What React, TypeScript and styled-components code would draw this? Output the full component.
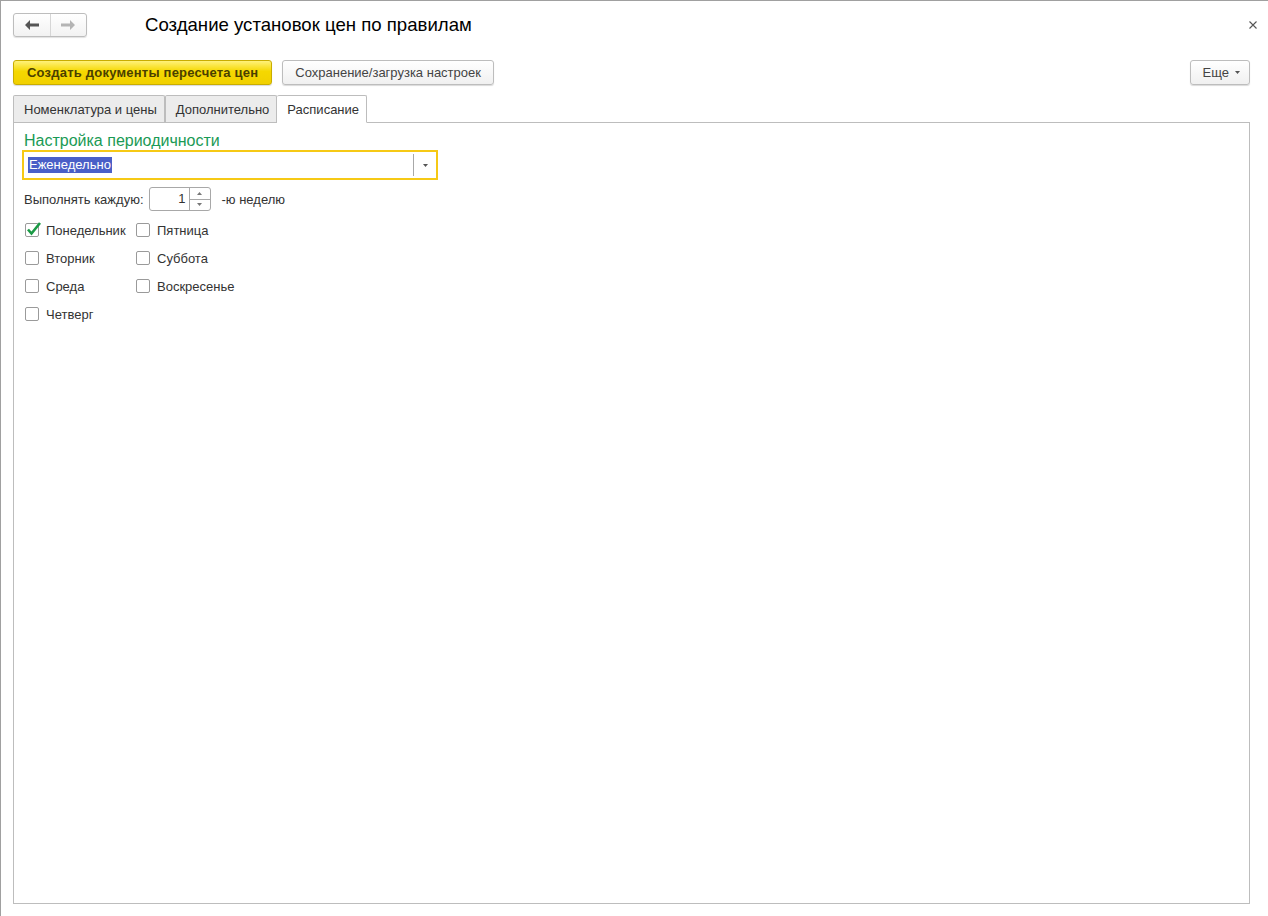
import React from "react";
import styled, { createGlobalStyle } from "styled-components";

const GlobalStyle = createGlobalStyle`
  html, body {
    margin: 0;
    padding: 0;
    background: #fff;
  }
  body {
    font-family: Arial, "Liberation Sans", sans-serif;
    font-size: 13px;
    color: #333;
  }
`;

const Window = styled.div`
  box-sizing: border-box;
  width: 1268px;
  height: 916px;
  border-top: 1px solid #a0a0a0;
  border-left: 1px solid #a0a0a0;
  padding: 12px 18px 12px 12px;
  display: flex;
  flex-direction: column;
  background: #fff;
`;

const TitleBar = styled.div`
  display: flex;
  align-items: center;
  height: 24px;
`;

const NavGroup = styled.div`
  display: flex;
  width: 74px;
  height: 24px;
  box-sizing: border-box;
  border: 1px solid #bdbdbd;
  border-radius: 3px;
  background: linear-gradient(#fff, #f2f2f2);
  box-shadow: 0 1px 1px rgba(0, 0, 0, 0.12);
`;

const NavButton = styled.div<{ $divider?: boolean }>`
  flex: 1;
  display: flex;
  align-items: center;
  justify-content: center;
  border-right: ${(p) => (p.$divider ? "1px solid #d6d6d6" : "none")};
`;

const Title = styled.h1`
  margin: 0 0 0 58px;
  font-size: 18.6px;
  font-weight: normal;
  color: #000;
  flex: 1;
`;

const CloseMark = styled.div`
  width: 14px;
  height: 14px;
  margin-right: -10px;
  display: flex;
  align-items: center;
  justify-content: center;
`;

const Toolbar = styled.div`
  display: flex;
  align-items: center;
  gap: 10px;
  margin-top: 23px;
`;

const Button = styled.button<{ $primary?: boolean }>`
  box-sizing: border-box;
  height: 25px;
  padding: 0 ${(p) => (p.$primary ? "13px" : "12px")};
  font-family: Arial, "Liberation Sans", sans-serif;
  font-size: 13px;
  font-weight: ${(p) => (p.$primary ? "bold" : "normal")};
  letter-spacing: ${(p) => (p.$primary ? "0.22px" : "0")};
  color: ${(p) => (p.$primary ? "#4a4000" : "#444")};
  border: 1px solid ${(p) => (p.$primary ? "#c9ad00" : "#bdbdbd")};
  border-radius: 3px;
  background: ${(p) =>
    p.$primary ? "linear-gradient(#fff27a, #f5d800 45%, #f1d000)" : "linear-gradient(#fff, #f0f0f0)"};
  box-shadow: 0 1px 1px rgba(0, 0, 0, 0.15);
  display: flex;
  align-items: center;
  gap: 6px;
  cursor: pointer;
`;

const MoreButton = styled(Button)`
  padding: 0 9px 0 12px;
`;

const Spacer = styled.div`
  flex: 1;
`;

const Tabs = styled.div`
  display: flex;
  margin-top: 10px;
  height: 28px;
  position: relative;
  z-index: 1;
`;

const Tab = styled.div<{ $active?: boolean }>`
  box-sizing: border-box;
  height: ${(p) => (p.$active ? "28px" : "27px")};
  padding: 0 7px 0 10px;
  display: flex;
  align-items: center;
  border: 1px solid #bdbdbd;
  border-bottom: ${(p) => (p.$active ? "1px solid #fff" : "none")};
  border-left: ${(p) => (p.$active ? "none" : "1px solid #bdbdbd")};
  border-radius: 2px 2px 0 0;
  background: ${(p) => (p.$active ? "#fff" : "#ececec")};
  color: #333;
  align-self: flex-start;
  &:first-child {
    border-left: 1px solid #bdbdbd;
  }
`;

const Panel = styled.div`
  flex: 1;
  margin-top: -1px;
  border: 1px solid #bdbdbd;
  padding: 9px 10px;
  display: flex;
  flex-direction: column;
`;

const GroupTitle = styled.div`
  color: #1a9a55;
  font-size: 16px;
  line-height: 18px;
`;

const Select = styled.div`
  box-sizing: border-box;
  width: 416px;
  height: 30px;
  margin: 0 0 0 -2px;
  border: 2px solid #f6c915;
  display: flex;
  align-items: center;
  padding-left: 4px;
`;

const SelectedText = styled.span`
  background: #4a5fc7;
  color: #fff;
  font-size: 13px;
  line-height: 16px;
  padding: 0 1px;
`;

const SelectArrow = styled.div`
  margin-left: auto;
  width: 22px;
  height: 22px;
  border-left: 1px solid #a8a8a8;
  display: flex;
  align-items: center;
  justify-content: center;
`;

const Row = styled.div`
  display: flex;
  align-items: center;
  margin-top: 7px;
  gap: 5px;
`;

const Spin = styled.div`
  box-sizing: border-box;
  width: 62px;
  height: 24px;
  border: 1px solid #a8a8a8;
  border-radius: 3px;
  display: flex;
  margin-right: 6px;
`;

const SpinValue = styled.div`
  flex: 1;
  text-align: right;
  padding-right: 3px;
  line-height: 22px;
  color: #333;
`;

const SpinButtons = styled.div`
  width: 20px;
  border-left: 1px solid #a8a8a8;
  display: flex;
  flex-direction: column;
`;

const SpinButton = styled.div<{ $top?: boolean }>`
  flex: 1;
  display: flex;
  align-items: center;
  justify-content: center;
  border-bottom: ${(p) => (p.$top ? "1px solid #a8a8a8" : "none")};
`;

const Days = styled.div`
  display: grid;
  grid-template-columns: 111px auto;
  grid-auto-flow: column;
  grid-template-rows: repeat(4, 28px);
  margin-top: 5px;
  justify-content: start;
`;

const DayLabel = styled.label`
  display: flex;
  align-items: center;
  gap: 7px;
  height: 28px;
  color: #333;
  padding-left: 1px;
`;

const Box = styled.span`
  position: relative;
  box-sizing: border-box;
  width: 14px;
  height: 14px;
  border: 1px solid #9a9a9a;
  border-radius: 2px;
  background: #fff;
  display: inline-block;
`;

const Tick = styled.svg`
  position: absolute;
  left: 0px;
  top: -3px;
`;

const days: { name: string; checked?: boolean }[] = [
  { name: "Понедельник", checked: true },
  { name: "Вторник" },
  { name: "Среда" },
  { name: "Четверг" },
  { name: "Пятница" },
  { name: "Суббота" },
  { name: "Воскресенье" },
];

const Tri = ({ up, color = "#555" }: { up?: boolean; color?: string }) => (
  <svg width="5" height="3" viewBox="0 0 5 3">
    <path d={up ? "M0 3 L2.5 0 L5 3 Z" : "M0 0 L5 0 L2.5 3 Z"} fill={color} />
  </svg>
);

export default function App() {
  return (
    <>
      <GlobalStyle />
      <Window>
        <TitleBar>
          <NavGroup>
            <NavButton $divider>
              <svg width="14" height="10" viewBox="0 0 14 10">
                <path d="M0 5 L5 0 L5 3.5 L14 3.5 L14 6.5 L5 6.5 L5 10 Z" fill="#555" />
              </svg>
            </NavButton>
            <NavButton>
              <svg width="14" height="10" viewBox="0 0 14 10">
                <path d="M14 5 L9 0 L9 3.5 L0 3.5 L0 6.5 L9 6.5 L9 10 Z" fill="#b4b4b4" />
              </svg>
            </NavButton>
          </NavGroup>
          <Title>Создание установок цен по правилам</Title>
          <CloseMark>
            <svg width="8" height="8" viewBox="0 0 8 8">
              <path d="M0.5 0.5 L7.5 7.5 M7.5 0.5 L0.5 7.5" stroke="#555" strokeWidth="1.1" />
            </svg>
          </CloseMark>
        </TitleBar>

        <Toolbar>
          <Button $primary>Создать документы пересчета цен</Button>
          <Button>Сохранение/загрузка настроек</Button>
          <Spacer />
          <MoreButton>
            Еще
            <Tri />
          </MoreButton>
        </Toolbar>

        <Tabs>
          <Tab>Номенклатура и цены</Tab>
          <Tab>Дополнительно</Tab>
          <Tab $active>Расписание</Tab>
        </Tabs>

        <Panel>
          <GroupTitle>Настройка периодичности</GroupTitle>
          <Select>
            <SelectedText>Еженедельно</SelectedText>
            <SelectArrow>
              <Tri />
            </SelectArrow>
          </Select>

          <Row>
            <span>Выполнять каждую:</span>
            <Spin>
              <SpinValue>1</SpinValue>
              <SpinButtons>
                <SpinButton $top>
                  <Tri up color="#777" />
                </SpinButton>
                <SpinButton>
                  <Tri color="#777" />
                </SpinButton>
              </SpinButtons>
            </Spin>
            <span>-ю неделю</span>
          </Row>

          <Days>
            {days.map((d) => (
              <DayLabel key={d.name}>
                <Box>
                  {d.checked && (
                    <Tick width="16" height="16" viewBox="0 0 16 16">
                      <path d="M2 8.5 L5.5 12.5 L14 2" fill="none" stroke="#1a9a45" strokeWidth="2.6" />
                    </Tick>
                  )}
                </Box>
                {d.name}
              </DayLabel>
            ))}
          </Days>
        </Panel>
      </Window>
    </>
  );
}
